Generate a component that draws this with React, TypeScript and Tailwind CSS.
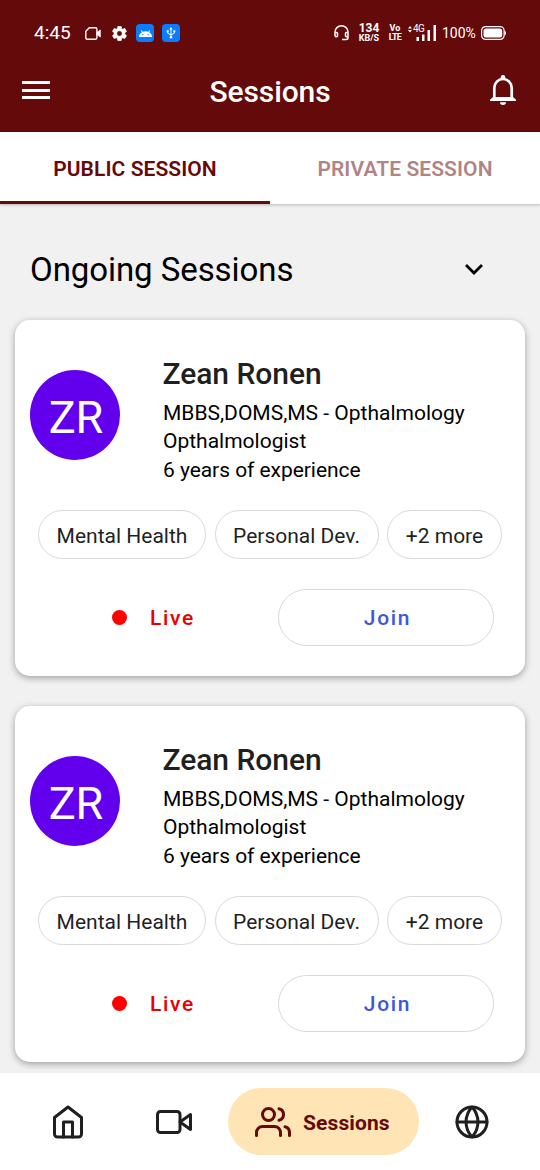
import React from 'react';

interface Session {
  id: number;
  initials: string;
  name: string;
  degree: string;
  role: string;
  experience: string;
  tags: string[];
}

const sessions: Session[] = [1, 2].map(id => ({
  id,
  initials: 'ZR',
  name: 'Zean Ronen',
  degree: 'MBBS,DOMS,MS - Opthalmology',
  role: 'Opthalmologist',
  experience: '6 years of experience',
  tags: ['Mental Health', 'Personal Dev.', '+2 more'],
}));

const tagWidths = ['w-[168px]', 'w-[164px]', 'w-[115px]'];

function StatusBar() {
  return (
    <div className="h-[66px] flex items-center justify-between pl-[34px] pr-[34px] text-white">
      <div className="flex items-center h-5">
        <span className="w-[51px] text-[19px] leading-5">4:45</span>
        <svg className="w-4 h-[13px] mr-[11px]" viewBox="0 0 16 13" fill="none" stroke="currentColor" strokeWidth="1.4">
          <path d="M4.3.8h6.2q1.4 0 1.4 1.4v8.6q0 1.400-1.400 1.400H2.200Q.8 12.200.8 10.800V4.300z" />
          <path d="M12 5.500 15.300 3v7L12 7.500z" fill="currentColor" strokeWidth=".8" />
        </svg>
        <svg className="w-[15px] h-[15px] mr-[9px]" viewBox="2 2 20 20" fill="currentColor">
          <path
            stroke="currentColor"
            strokeWidth=".8"
            d="M19.14 12.94c.04-.3.06-.61.06-.94 0-.32-.02-.64-.07-.94l2.03-1.58c.18-.14.23-.41.12-.61l-1.92-3.32c-.12-.22-.37-.29-.59-.22l-2.39.96c-.5-.38-1.03-.7-1.62-.94l-.36-2.54c-.04-.24-.24-.41-.48-.41h-3.84c-.24 0-.43.17-.47.41l-.36 2.54c-.59.24-1.13.57-1.62.94l-2.39-.96c-.22-.08-.47 0-.59.22L2.740 8.870c-.12.21-.08.47.12.61l2.03 1.58c-.05.3-.09.63-.09.94s.02.64.07.94l-2.03 1.58c-.18.14-.23.41-.12.61l1.920 3.320c.12.22.37.29.59.22l2.390-.96c.5.38 1.030.7 1.620.94l.36 2.540c.05.24.24.41.48.41h3.840c.24 0 .44-.17.47-.41l.36-2.540c.59-.24 1.130-.56 1.620-.94l2.390.96c.22.08.47 0 .59-.22l1.920-3.320c.12-.22.07-.47-.12-.61l-2.010-1.580zM12 15.600c-1.980 0-3.600-1.620-3.600-3.600s1.620-3.600 3.600-3.600 3.600 1.620 3.600 3.600-1.620 3.600-3.600 3.600z"
          />
        </svg>
        <span className="w-[18px] h-[18px] rounded-[4px] bg-[#0a7cff] flex items-center justify-center mr-2">
          <svg className="w-[13px] h-[7px]" viewBox="0 0 12 7" preserveAspectRatio="none">
            <path d="M0 7a6 5.500 0 0 1 2.600-4.800L1.700.4l.7-.4 1 1.700a7 7 0 0 1 5.200 0l1-1.700.7.4-.9 1.800A6 5.500 0 0 1 12 7z" fill="#fff" />
            <circle cx="3.500" cy="4.700" r=".6" fill="#0a7cff" />
            <circle cx="8.500" cy="4.700" r=".6" fill="#0a7cff" />
          </svg>
        </span>
        <span className="w-[18px] h-[18px] rounded-[4px] bg-[#0a7cff] flex items-center justify-center">
          <svg className="w-3 h-3" viewBox="0 0 12 12" fill="none" stroke="#fff" strokeWidth="1">
            <path d="M6 2v8M2.700 4.500v1.700L6 7.800l3.300-1.600V4" />
            <path d="M6 0l1.700 2.500H4.300z" fill="#fff" stroke="none" />
            <circle cx="6" cy="10.300" r="1.300" fill="#fff" stroke="none" />
            <path d="M1.700 3.300h2v2h-2zM8.300 3.300h2v2h-2z" fill="#fff" stroke="none" />
          </svg>
        </span>
      </div>

      <div className="flex items-center h-5">
        <svg className="w-[15px] h-4 mr-[9px]" viewBox="0 0 15 16" fill="none" stroke="currentColor" strokeWidth="1.500">
          <path d="M1 11V7a6.500 6.200 0 0 1 13 0v6q0 1.600-1.600 1.600H8M1 7.500h1.500q1 0 1 1v2.300q0 1-1 1T1 11M14 7.500h-1.500q-1 0-1 1v2.300q0 1 1 1T14 11" />
        </svg>
        <div className="w-[22px] flex flex-col items-center font-bold whitespace-nowrap mr-[9px]">
          <span className="text-[12px] leading-[11px]">134</span>
          <span className="text-[9px] leading-[9px]">KB/S</span>
        </div>
        <div className="w-[12px] flex flex-col items-center font-bold whitespace-nowrap mr-[7px]">
          <span className="text-[9px] leading-[9px]">Vo</span>
          <span className="text-[9px] leading-[9px] tracking-[-0.7px]">LTE</span>
        </div>
        <div className="relative w-7 h-4 mr-[6px]">
          <svg className="w-7 h-4" viewBox="0 0 28 16" fill="currentColor">
            <path d="M2 1 4 3.500H0zM2 7.500 0 5h4zM8.500 12H11v4H8.500zM14 9.500h2.500V16H14zM19.500 5H22v11h-2.500zM25.500 0H28v16h-2.500z" />
          </svg>
          <span className="absolute left-[5px] -top-px text-[10px] leading-[10px] tracking-[-0.5px]">4G</span>
        </div>
        <span className="w-[34px] text-[14px] leading-5 whitespace-nowrap mr-[5px]">100%</span>
        <svg className="w-[25px] h-[14px]" viewBox="0 0 25 14">
          <rect x=".6" y=".6" width="22.500" height="12.800" rx="4" fill="none" stroke="currentColor" strokeWidth="1.200" />
          <rect x="2.500" y="2.500" width="18.700" height="9" rx="2.500" fill="currentColor" />
          <path d="M23.500 4.500q1.500.5 1.500 2.500t-1.500 2.500z" fill="currentColor" />
        </svg>
      </div>
    </div>
  );
}

function Header() {
  return (
    <header className="h-[66px] flex items-start justify-between pl-[22px] pr-6 text-white">
      <button className="w-7 mt-[15px] flex flex-col gap-[4.500px]" aria-label="Menu">
        <span className="h-[3px] w-full bg-white" />
        <span className="h-[3px] w-full bg-white" />
        <span className="h-[3px] w-full bg-white" />
      </button>
      <h1 className="text-[30px] leading-9 font-medium mt-[8px] tracking-[-0.1px]">Sessions</h1>
      <button className="mt-[9px]" aria-label="Notifications">
        <svg className="w-[26px] h-[30px]" viewBox="0 0 26 30" fill="none">
          <path d="M4.300 23.500V13a8.700 9 0 0 1 17.400 0v10.500" stroke="currentColor" strokeWidth="2.700" />
          <path d="M10.700 4.500V2.300a2.300 2.300 0 0 1 4.600 0v2.200z" fill="currentColor" />
          <path d="M3 22h20l3 2.800V26H0v-1.200z" fill="currentColor" />
          <path d="M10 27.300h6a3 2.700 0 0 1-6 0z" fill="currentColor" />
        </svg>
      </button>
    </header>
  );
}

function Tabs() {
  return (
    <div className="relative z-10 h-[72px] flex bg-white shadow-[0_1px_3px_rgba(0,0,0,0.25)] text-[21px] font-semibold text-[#650a0a]">
      <button className="flex-1 pt-[7px] border-b-[3px] border-[#650a0a] tracking-[0.070px]">PUBLIC SESSION</button>
      <button className="flex-1 pt-[7px] border-b-[3px] border-transparent tracking-[0.070px]">
        <span className="opacity-50">PRIVATE SESSION</span>
      </button>
    </div>
  );
}

function SessionCard({ session }: { session: Session }) {
  return (
    <article className="h-[356px] shrink-0 rounded-[15px] bg-white shadow-[0_2px_7px_rgba(0,0,0,0.35)]">
      <div className="flex pl-[15px] pt-[34px]">
        <div className="w-[90px] h-[90px] mt-[16px] mr-[43px] shrink-0 rounded-full bg-[#6200ee] text-white text-[45px] leading-[96px] text-center pl-[2px]">
          {session.initials}
        </div>
        <div className="text-[21px] leading-[28.500px] text-black whitespace-nowrap">
          <h3 className="text-[30px] leading-10 font-medium text-[#1f1f1f] mb-[5px] -ml-[0.500px] tracking-[-0.05px]">{session.name}</h3>
          <p>{session.degree}</p>
          <p>{session.role}</p>
          <p className="tracking-[-0.050px]">{session.experience}</p>
        </div>
      </div>

      <div className="flex gap-[8.500px] pl-[23px] mt-[26px]">
        {session.tags.map((tag, i) => (
          <span
            key={tag}
            className={`${tagWidths[i]} h-[49px] rounded-full border border-[#d9d9d9] flex items-center justify-center pt-[4px] text-[21px] text-[#1f1f1f] whitespace-nowrap`}
          >
            {tag}
          </span>
        ))}
      </div>

      <div className="flex items-center mt-[30px] pl-[97px] text-[21px] font-medium">
        <span className="w-[15px] h-[15px] -mt-px rounded-full bg-[#ff0000]" />
        <span className="w-[128px] ml-[23px] pt-[2px] text-[#e60000] tracking-[1.700px]">Live</span>
        <button className="w-[216px] h-[57px] rounded-full border border-[#d9d9d9] text-[#3d56e0] tracking-[1.700px] pt-[3px] pl-[3px]">
          Join
        </button>
      </div>
    </article>
  );
}

function NavIcon({ children }: { children: React.ReactNode }) {
  return (
    <svg
      className="w-9 h-9 shrink-0"
      viewBox="0 0 24 24"
      fill="none"
      stroke="currentColor"
      strokeWidth="2"
      strokeLinecap="round"
      strokeLinejoin="round"
    >
      {children}
    </svg>
  );
}

function BottomNav() {
  return (
    <nav className="relative z-10 h-[97px] shrink-0 flex items-center bg-white pl-[50px] text-[#1f1f1f]">
      <NavIcon>
        <path d="M3 9l9-7 9 7v11a2 2 0 0 1-2 2H5a2 2 0 0 1-2-2z" />
        <polyline points="9 22 9 12 15 12 15 22" />
      </NavIcon>
      <div className="ml-[70px]">
        <NavIcon>
          <polygon points="23 7 16 12 23 17 23 7" />
          <rect x="1" y="5" width="15" height="14" rx="2" ry="2" />
        </NavIcon>
      </div>
      <div className="ml-[35.500px] w-[191px] h-[67px] rounded-full bg-[#ffe4b5] flex items-center pl-[27.500px] text-[#650a0a]">
        <NavIcon>
          <path d="M17 21v-2a4 4 0 0 0-4-4H5a4 4 0 0 0-4 4v2" />
          <circle cx="9" cy="7" r="4" />
          <path d="M23 21v-2a4 4 0 0 0-3-3.870" />
          <path d="M16 3.130a4 4 0 0 1 0 7.750" />
        </NavIcon>
        <span className="ml-[12px] pt-[4px] text-[21px] font-bold tracking-[0.120px]">Sessions</span>
      </div>
      <div className="ml-[35px]">
        <NavIcon>
          <circle cx="12" cy="12" r="10" />
          <path d="M2 12h20" />
          <path d="M12 2a15.300 15.300 0 0 1 4 10 15.300 15.300 0 0 1-4 10 15.300 15.300 0 0 1-4-10 15.300 15.300 0 0 1 4-10z" />
        </NavIcon>
      </div>
    </nav>
  );
}

export default function App() {
  return (
    <div className="w-[540px] h-[1170px] flex flex-col overflow-hidden bg-[#f1f1f1] font-['Roboto',sans-serif]">
      <div className="shrink-0 bg-[#650a0a]">
        <StatusBar />
        <Header />
      </div>
      <div className="shrink-0">
        <Tabs />
      </div>

      <main className="flex-1 min-h-0 flex flex-col px-[15px]">
        <div className="h-[115.500px] shrink-0 flex items-center justify-between pl-[15px] pr-[42px] pt-[17px]">
          <h2 className="text-[33px] leading-10 text-black tracking-[-0.070px]">Ongoing Sessions</h2>
          <svg className="w-[18px] h-[12px] mb-[3px]" viewBox="0 0 18 12" fill="none" stroke="#000" strokeWidth="2.800">
            <path d="M1 2l8 8 8-8" />
          </svg>
        </div>
        <div className="flex flex-col gap-[30px]">
          {sessions.map(session => (
            <SessionCard key={session.id} session={session} />
          ))}
        </div>
      </main>

      <BottomNav />
    </div>
  );
}
